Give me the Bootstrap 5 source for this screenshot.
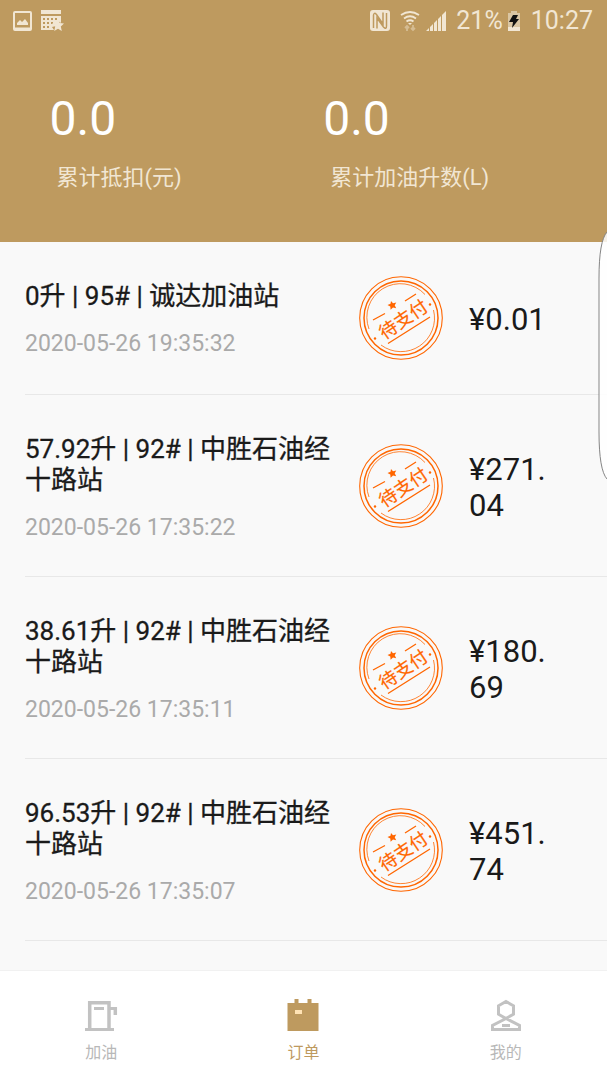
<!DOCTYPE html>
<html lang="zh-CN">
<head>
<meta charset="utf-8">
<meta name="viewport" content="width=device-width, initial-scale=1">
<title>订单</title>
<link href="https://cdn.jsdelivr.net/npm/bootstrap@5.3.0/dist/css/bootstrap.min.css" rel="stylesheet">
<style>
  :root { --gold: #be9a5f; --cream: #f1e6d3; }
  body { font-family: Roboto, "Noto Sans CJK SC", sans-serif; background: #f9f9f9; color: #1a1a1a; }
  .gold-area { background: var(--gold); color: #fff; }
  .status-bar { height: 42px; padding: 0 14px 0 12px; color: var(--cream); font-size: 25px; line-height: 42px; }
  .totals { padding: 47px 0 49px 8%; }
  .total-item { width: 49%; }
  .total-value { font-size: 48px; line-height: 60px; padding-left: 1px; }
  .total-label { font-size: 22px; line-height: 30px; padding: 14px 0 0 8px; color: var(--cream); }
  .order-row { min-height: 153px; margin-left: 25px; padding-right: 56px; border-bottom: 1px solid #e8e8e8; }
  .order-text { padding: 39px 8px 34px 0; min-width: 0; }
  .order-title { font-size: 26px; line-height: 31px; font-weight: 400; margin-bottom: 18px; -webkit-text-stroke: .3px; }
  .order-time { font-size: 23px; line-height: 28px; color: #aaa; }
  .order-price { width: 82px; margin-left: 26px; padding-top: 4px; font-size: 31px; line-height: 36px; word-break: break-all; }
  .tab-bar { background: #fff; border-top: 1px solid #f1f1f1; }
  .tab-item { padding: 25px 0 15px; color: #b8b8b8; font-size: 16px; line-height: 24px; }
  .tab-item svg { margin-bottom: 9px; }
  .tab-item.active { color: var(--gold); }
  .edge-handle { top: 232px; right: 0; }
</style>
</head>
<body>
<svg class="d-none" xmlns="http://www.w3.org/2000/svg">
  <symbol id="stamp" viewBox="0 0 84 84">
    <g fill="none" stroke="#ff6600">
      <circle cx="42" cy="42" r="41.3" stroke-width="1.1"/>
      <circle cx="42" cy="42" r="37" stroke-width="1.5"/>
      <path d="M10 53A33.500 33.500 0 0 1 66 18.500M74.500 34A33.500 33.500 0 0 1 22 69" stroke-width=".8"/>
      <path d="M14 44L26 37.500M46 25L57 18M29 67.500L71 41" stroke-width="1.3"/>
    </g>
    <path fill="#ff6600" d="M32 25l2 2.200 3.300-.8-1.600 2.900 1.500 2.900-3.200-.7-2.400 2.200-.3-3.200-2.800-1.600 3-1.200z"/>
    <circle cx="16" cy="62.500" r="1.200" fill="#ff6600"/><circle cx="71" cy="28.500" r="1.200" fill="#ff6600"/>
    <text x="44" y="50" text-anchor="middle" transform="rotate(-34 44 43)" font-size="18" font-weight="400" fill="#ff6600" stroke="#ff6600" stroke-width=".2" font-family="Noto Sans CJK SC, sans-serif">待支付</text>
  </symbol>
</svg>

<div class="position-relative d-flex flex-column min-vh-100">
  <header class="gold-area">
    <div class="status-bar d-flex align-items-center">
      <svg width="20" height="20" viewBox="0 0 20 20" fill="none" stroke="currentColor" stroke-width="2"><rect x="2" y="1" width="17" height="18" rx="1"/><path d="M2 17.500h17"/><path fill="currentColor" stroke="none" d="M5 14v-2l3-3 2 2 3-3 3 4v2z"/></svg>
      <svg class="ms-2" width="24" height="22" viewBox="0 0 24 22" fill="currentColor"><path d="M1 0h20v4H1zM1 6h20v7l-3-2-2 5-4 1 2 3H1z"/><path fill="#be9a5f" d="M3 8h2v2H3zm4 0h2v2H7zm4 0h2v2h-2zm4 0h2v2h-2zM3 12h2v2H3zm4 0h2v2H7zm4 0h2v2h-2zM3 16h2v2H3zm4 0h2v2H7z"/><path d="M18 9l1.700 4 4.300.4-3.200 3 1 4.600-3.800-2.300-3.800 2.300 1-4.600-3.200-3 4.300-.4z"/></svg>
      <svg class="ms-auto" width="22" height="22" viewBox="0 0 22 22"><rect x="0" y="0" width="20" height="21" rx="3" fill="currentColor"/><path fill="none" stroke="#be9a5f" stroke-width="1.500" d="M3.500 18V5Q4 2 6.500 4.500L13 14V2.500M7 18.500V8l6.500 9q3 3 3-1V3"/></svg>
      <svg class="ms-2" width="22" height="22" viewBox="0 0 22 22" fill="none" stroke="currentColor" stroke-width="1.800"><path d="M1 5q9-6 18 0M4 8.500q6-4.500 12 0M6.500 11.500q3.500-2.500 7 0"/><path fill="currentColor" stroke="none" d="M8 13h4l-2 2z"/><path opacity=".45" d="M7 21v-5m-2 2 2-2 2 2M13 15v5m-2-2 2 2 2-2"/></svg>
      <svg class="ms-1" width="22" height="22" viewBox="0 0 22 22" fill="currentColor"><path d="M0 21l3-3v3zM4 17l3-3v7H4zM8 13l3-3v11H8zM12 9l3-3v15h-3zM16 5l4-4v20h-4z"/></svg>
      <span class="ms-2">21%</span>
      <svg class="ms-1" width="16" height="22" viewBox="0 0 16 22"><path fill="#dac6a3" d="M4 1h6v2h3v14H1V3h3z"/><path fill="currentColor" d="M1 17h12v4H1z"/><path fill="#111" d="M6 5h5l-2 4h3l-7 9 1-6H2z"/></svg>
      <span class="ms-2">10:27</span>
    </div>
    <div class="totals d-flex">
      <div class="total-item"><div class="total-value">0.0</div><div class="total-label">累计抵扣(元)</div></div>
      <div class="total-item"><div class="total-value">0.0</div><div class="total-label">累计加油升数(L)</div></div>
    </div>
  </header>

  <main class="flex-grow-1">
    <ul class="list-unstyled mb-0">
      <li class="order-row d-flex align-items-center">
        <div class="order-text flex-grow-1 align-self-start"><h2 class="order-title">0升 | 95# | 诚达加油站</h2><div class="order-time">2020-05-26 19:35:32</div></div>
        <svg class="flex-shrink-0" width="84" height="84"><use href="#stamp"/></svg>
        <div class="order-price flex-shrink-0">¥0.01</div>
      </li>
      <li class="order-row d-flex align-items-center">
        <div class="order-text flex-grow-1 align-self-start"><h2 class="order-title">57.92升 | 92# | 中胜石油经十路站</h2><div class="order-time">2020-05-26 17:35:22</div></div>
        <svg class="flex-shrink-0" width="84" height="84"><use href="#stamp"/></svg>
        <div class="order-price flex-shrink-0">¥271.04</div>
      </li>
      <li class="order-row d-flex align-items-center">
        <div class="order-text flex-grow-1 align-self-start"><h2 class="order-title">38.61升 | 92# | 中胜石油经十路站</h2><div class="order-time">2020-05-26 17:35:11</div></div>
        <svg class="flex-shrink-0" width="84" height="84"><use href="#stamp"/></svg>
        <div class="order-price flex-shrink-0">¥180.69</div>
      </li>
      <li class="order-row d-flex align-items-center">
        <div class="order-text flex-grow-1 align-self-start"><h2 class="order-title">96.53升 | 92# | 中胜石油经十路站</h2><div class="order-time">2020-05-26 17:35:07</div></div>
        <svg class="flex-shrink-0" width="84" height="84"><use href="#stamp"/></svg>
        <div class="order-price flex-shrink-0">¥451.74</div>
      </li>
    </ul>
  </main>

  <nav class="tab-bar row g-0 text-center">
    <a href="#fuel" class="tab-item col text-decoration-none d-flex flex-column align-items-center">
      <svg width="36" height="36" viewBox="0 0 36 36" fill="none" stroke="#c2c2c2"><path stroke-width="3.500" d="M6.700 32V6.700H26V32"/><path stroke-width="3" d="M2 33.500h29M11 12.500h10M26 12.500h8"/><path stroke-width="3.500" d="M32.300 11v8"/></svg>
      加油</a>
    <a href="#orders" class="tab-item active col text-decoration-none d-flex flex-column align-items-center" aria-current="page">
      <svg width="36" height="36" viewBox="0 0 36 36"><path fill="#be9a5f" d="M2.500 7h7V3h4v4h9V3h4v4h7v28h-31z"/><path fill="#ffe3b5" d="M10 14h7v4h-7z"/></svg>
      订单</a>
    <a href="#mine" class="tab-item col text-decoration-none d-flex flex-column align-items-center">
      <svg width="36" height="36" viewBox="0 0 36 36" fill="none" stroke="#c2c2c2" stroke-width="3"><path d="M18 5.500l7.500 4.300v8.400L18 22.500l-7.500-4.300V9.800zM18 22.500L4.500 29.500v4h27v-4z"/><path d="M14 29.500h8"/></svg>
      我的</a>
  </nav>

  <svg class="edge-handle position-absolute" width="9" height="248" viewBox="0 0 9 248"><path d="M9 0Q1 9 1 46V200Q1 238 9 247" fill="#fff" fill-opacity=".85" stroke="#858585"/></svg>
</div>
<script src="https://cdn.jsdelivr.net/npm/bootstrap@5.3.0/dist/js/bootstrap.bundle.min.js"></script>
</body>
</html>
